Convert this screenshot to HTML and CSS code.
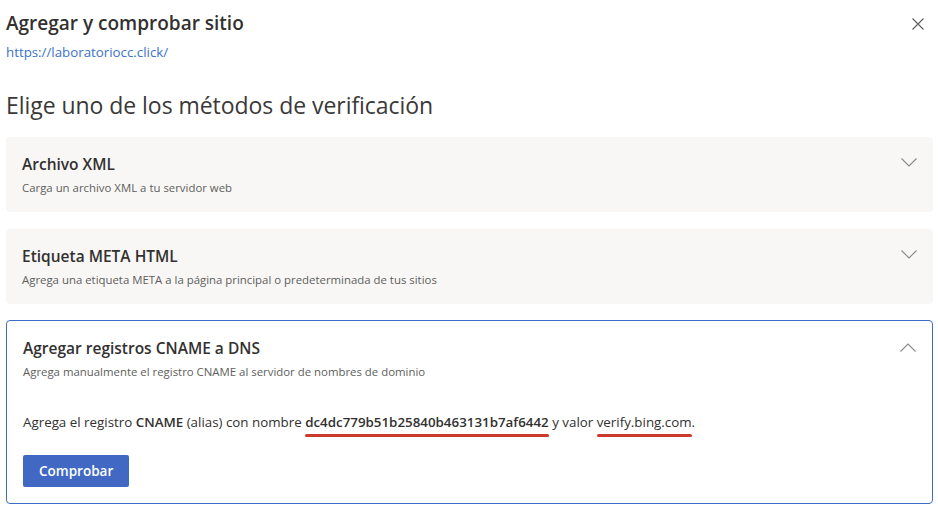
FILE: index.html
```html
<!DOCTYPE html>
<html lang="es">
<head>
  <meta charset="UTF-8" />
  <title>Agregar y comprobar sitio</title>
  <link rel="stylesheet" href="styles.css">
</head>
<body>
  <div class="panel">
    <div class="panel-header">
      <div>
        <h1 class="panel-title">Agregar y comprobar sitio</h1>
        <a class="site-url" href="#">https://laboratoriocc.click/</a>
      </div>
      <button class="close-btn" aria-label="Cerrar">
        <svg width="12" height="12" viewBox="0 0 12 12"><path d="M0.5 0.5 L11.5 11.5 M11.5 0.5 L0.5 11.5" stroke="#605e5c" stroke-width="1.1" fill="none"/></svg>
      </button>
    </div>

    <h2 class="section-title">Elige uno de los métodos de verificación</h2>

    <div class="methods">
      <div class="method">
        <div class="method-head">
          <div>
            <div class="method-name">Archivo XML</div>
            <div class="method-desc">Carga un archivo XML a tu servidor web</div>
          </div>
          <svg class="chevron" width="16" height="9" viewBox="0 0 16 9"><path d="M0.5 0.5 L8 8 L15.5 0.5" stroke="#8a8886" stroke-width="1.1" fill="none"/></svg>
        </div>
      </div>

      <div class="method">
        <div class="method-head">
          <div>
            <div class="method-name">Etiqueta META HTML</div>
            <div class="method-desc">Agrega una etiqueta META a la página principal o predeterminada de tus sitios</div>
          </div>
          <svg class="chevron" width="16" height="9" viewBox="0 0 16 9"><path d="M0.5 0.5 L8 8 L15.5 0.5" stroke="#8a8886" stroke-width="1.1" fill="none"/></svg>
        </div>
      </div>

      <div class="method open">
        <div class="method-head">
          <div>
            <div class="method-name">Agregar registros CNAME a DNS</div>
            <div class="method-desc">Agrega manualmente el registro CNAME al servidor de nombres de dominio</div>
          </div>
          <svg class="chevron" width="16" height="9" viewBox="0 0 16 9"><path d="M0.5 8.5 L8 1 L15.5 8.5" stroke="#8a8886" stroke-width="1.1" fill="none"/></svg>
        </div>
        <p class="method-body">
          Agrega el registro <b>CNAME</b> (alias) con nombre <span class="mark"><b>dc4dc779b51b25840b463131b7af6442</b></span> y valor <span class="mark">verify.bing.com</span>.
        </p>
        <button class="primary-btn">Comprobar</button>
      </div>
    </div>
  </div>
</body>
</html>
```

FILE: styles.css
```css
html, body {
  margin: 0;
  padding: 0;
  background: #ffffff;
  font-family: "Open Sans", "Noto Sans", sans-serif;
  color: #323130;
}

.panel {
  padding: 11px 5px 0 6px;
}

/* header with title, url and close */
.panel-header {
  display: flex;
  justify-content: space-between;
  align-items: flex-start;
}
.panel-title {
  margin: 0;
  font-size: 19px;
  font-weight: 600;
  line-height: 24px;
}
.site-url {
  display: block;
  margin-top: 8px;
  font-size: 13.3px;
  line-height: 18px;
  color: #3b73c9;
  text-decoration: none;
}
.close-btn {
  border: 0;
  background: none;
  padding: 0;
  margin: 7px 9px 0 0;
  width: 12px;
  height: 12px;
  cursor: pointer;
}

.section-title {
  margin: 29px 0 17px;
  font-size: 23px;
  font-weight: 400;
  line-height: 30px;
  color: #3a3938;
  letter-spacing: -0.05px;
}

/* method cards */
.methods {
  display: flex;
  flex-direction: column;
  gap: 16.5px;
}
.method {
  background: #f8f7f6;
  border-radius: 4px;
  padding: 16px 16px 0 16px;
  height: 75px;
  box-sizing: border-box;
}
.method-head {
  display: flex;
  justify-content: space-between;
  align-items: flex-start;
}
.method-name {
  font-size: 15.5px;
  font-weight: 600;
  line-height: 22px;
}
.method-desc {
  margin-top: 5px;
  font-size: 11.4px;
  line-height: 16px;
  color: #605e5c;
}
.chevron {
  margin: 5px 0 0 0;
}

.method.open {
  height: auto;
  background: #ffffff;
  border: 1px solid #3e6bc4;
  padding: 16px 16px 16px 16px;
}
.method.open .chevron {
  margin-top: 6px;
}
.method-body {
  margin: 32px 0 0;
  font-size: 13.35px;
  line-height: 20px;
}
.method-body b {
  font-weight: 600;
}
.mark {
  display: inline-block;
  position: relative;
}
.mark::after {
  content: "";
  position: absolute;
  left: 0;
  right: 0;
  bottom: -5px;
  height: 3px;
  border-radius: 2px;
  background: #cc3a2b;
}

.primary-btn {
  margin-top: 23px;
  background: #4169c4;
  color: #ffffff;
  border: 0;
  border-radius: 2px;
  height: 32px;
  padding: 0 16px;
  font-family: inherit;
  font-size: 13.5px;
  font-weight: 600;
  cursor: pointer;
}
```
